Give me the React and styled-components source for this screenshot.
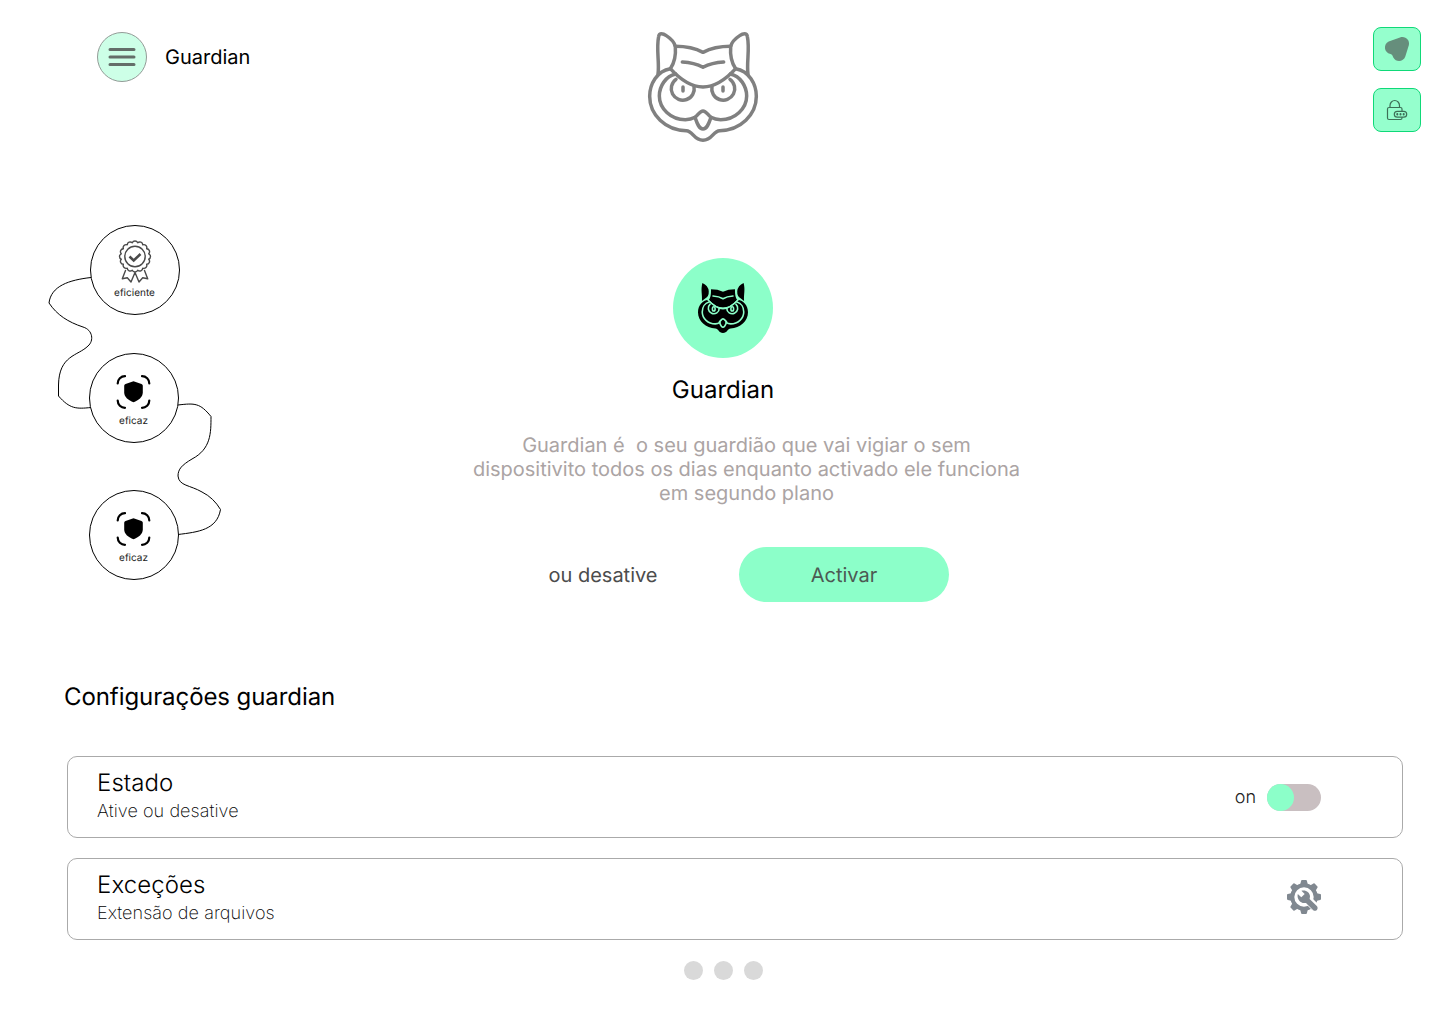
import React from 'react';
import styled, { createGlobalStyle } from 'styled-components';

const GlobalStyle = createGlobalStyle`
  *, *::before, *::after { box-sizing: border-box; }
  body { margin: 0; background: #fff; }
  h1, h2, h3, p { margin: 0; font-weight: 400; }
  button { font: inherit; padding: 0; cursor: pointer; text-rendering: inherit; }
  svg { display: block; flex: none; overflow: visible; }
`;

const Page = styled.div`
  width: 1446px;
  height: 1024px;
  overflow: hidden;
  display: flex;
  flex-direction: column;
  background: #fff;
  color: #000;
  font-family: Inter, 'Liberation Sans', sans-serif;
  font-size: 20px;
  text-rendering: geometricPrecision;
`;

const Header = styled.header`
  display: grid;
  grid-template-columns: 551px 110px 1fr;
  align-items: start;
  height: 225px;
  flex: none;
  padding: 27px 25px 0 97px;
`;

const Brand = styled.div`
  display: flex;
  align-items: center;
  gap: 18px;
  margin-top: 5px;
  line-height: 24px;
`;

const MenuButton = styled.button`
  display: grid;
  place-items: center;
  width: 50px;
  height: 50px;
  border: 1px solid #939b97;
  border-radius: 50%;
  background: #cdffe7;
`;

const Emblem = styled.div`
  margin-top: 5px;
`;

const Tools = styled.nav`
  display: flex;
  flex-direction: column;
  align-items: flex-end;
  gap: 17px;
`;

const ToolButton = styled.button`
  display: grid;
  place-items: center;
  width: 48px;
  height: 44px;
  border: 1px solid #0fd978;
  border-radius: 8px;
  background: #95ffcd;
`;

const Main = styled.main`
  display: flex;
  height: 445px;
  flex: none;
`;

const Diagram = styled.aside`
  position: relative;
  width: 449px;
  flex: none;
`;

const Links = styled.svg`
  position: absolute;
  left: 0;
  top: 0;
`;

const Node = styled.div`
  position: absolute;
  left: ${(p) => p.$x}px;
  top: ${(p) => p.$y}px;
  display: flex;
  flex-direction: column;
  align-items: center;
  justify-content: flex-end;
  width: 90px;
  height: 90px;
  padding-bottom: 15px;
  border: 1px solid #000;
  border-radius: 50%;
  background: #fff;
  color: #222;
  font-size: 10px;
  line-height: 12px;
`;

const NodeLabel = styled.span`
  margin-top: ${(p) => p.$gap}px;
  padding-right: 1px;
`;

const Hero = styled.section`
  display: flex;
  flex-direction: column;
  align-items: center;
  width: 548px;
  padding-top: 33px;
`;

const Badge = styled.div`
  display: grid;
  place-items: center;
  width: 100px;
  height: 100px;
  border-radius: 50%;
  background: #8cffc9;
`;

const HeroTitle = styled.h1`
  margin-top: 17px;
  font-size: 24px;
  line-height: 29px;
`;

const Description = styled.p`
  align-self: flex-start;
  width: 595px;
  margin-top: 29px;
  color: #aba4a4;
  font-size: 20px;
  line-height: 24px;
  text-align: center;
  white-space: pre;
`;

const Actions = styled.div`
  display: flex;
  align-items: center;
  align-self: flex-start;
  gap: 81px;
  margin: 42px 0 0 99px;
  color: #4c4c4c;
`;

const PlainAction = styled.button`
  width: 110px;
  border: 0;
  background: none;
  color: inherit;
  white-space: nowrap;
`;

const PrimaryAction = styled.button`
  width: 210px;
  height: 55px;
  border: 0;
  border-radius: 28px;
  background: #8cffc9;
  color: #4c5a53;
`;

const Settings = styled.section`
  padding: 12px 43px 0 67px;
`;

const SettingsTitle = styled.h2`
  margin-left: -3px;
  font-size: 24px;
  line-height: 29px;
  letter-spacing: -0.08px;
`;

const CardList = styled.div`
  display: flex;
  flex-direction: column;
  gap: 20px;
  margin-top: 45px;
`;

const Card = styled.div`
  display: flex;
  align-items: center;
  justify-content: space-between;
  height: 82px;
  padding: 0 81px 0 29px;
  border: 1px solid #aaa;
  border-radius: 10px;
`;

const CardTitle = styled.h3`
  font-size: 24px;
  font-weight: 300;
  line-height: 29px;
  letter-spacing: 0.1px;
`;

const CardText = styled.p`
  margin-top: 4px;
  padding-bottom: 3px;
  font-size: 18px;
  font-weight: 200;
  line-height: 22px;
  letter-spacing: 0.08px;
`;

const SwitchGroup = styled.div`
  display: flex;
  align-items: center;
  gap: 11px;
  font-size: 18px;
  font-weight: 300;
  color: #222;
`;

const SwitchLabel = styled.span`
  padding-top: 1px;
`;

const Track = styled.div`
  width: 54px;
  height: 27px;
  border-radius: 14px;
  background: #c9bfc1;
`;

const Thumb = styled.div`
  width: 27px;
  height: 27px;
  border-radius: 50%;
  background: #8cffc9;
`;

const SettingsLink = styled.div`
  padding-bottom: 4px;
`;

const Pager = styled.footer`
  display: flex;
  justify-content: center;
  gap: 11px;
  margin-top: 21px;
`;

const Dot = styled.span`
  width: 19px;
  height: 19px;
  border-radius: 50%;
  background: #d9d9d9;
`;

const OwlOutline = () => (
  <svg width="110" height="110" viewBox="39 36 330 330" fill="none" stroke="#808080" strokeWidth="10.5" strokeLinecap="round" strokeLinejoin="round">
    <path d="M69 162C74 130 63 88 71 49C73 38 84 40 94 47C109 57 119 67 121 80C123 106 119 128 106 146" />
    <path d="M339 162C334 130 345 88 337 49C335 38 324 40 314 47C299 57 289 67 287 80C285 106 289 128 302 146" />
    <path d="M121 79Q170 79 204 97Q238 79 287 79" />
    <path d="M142 126C166 127 184 131 204 142C224 131 242 127 266 126" />
    <path d="M106 146C137 180 170 201 204 201C238 201 271 180 302 146" />
    <path d="M106 146C66 153 44 192 44 229C44 284 91 331 154 332C174 333 176 361 204 361C232 361 234 333 254 332C317 331 364 284 364 229C364 192 342 153 302 146" />
    <path d="M122 162C92 168 73 199 73 228C73 265 107 299 151 299C162 299 171 297 180 292" />
    <path d="M286 162C316 168 335 199 335 228C335 265 301 299 257 299C246 299 237 297 228 292" />
    <path d="M123 178A34.500 34.500 0 1 0 177 199" />
    <path d="M285 178A34.500 34.500 0 1 1 231 199" />
    <path d="M144 201V213M264 201V213" />
    <path d="M204 273C194 273 190 285 180 292C185 306 191 327 204 327C217 327 223 306 228 292C218 285 214 273 204 273Z" />
  </svg>
);

const OwlSolid = () => (
  <svg width="50" height="50" viewBox="39 36 330 330" fill="none" strokeLinecap="round" strokeLinejoin="round">
    <g fill="#000">
      <path d="M65 154C68 110 56 80 68 36Q106 52 110 90Q112 125 86 138Z" />
      <path d="M343 154C340 110 352 80 340 36Q302 52 298 90Q296 125 322 138Z" />
      <path d="M125 78Q170 78 204 94Q238 78 283 78Q282 130 297 148Q250 198 204 198Q158 198 111 148Q126 130 125 78Z" />
      <path d="M106 146C69 151 39 184 39 229C39 288 91 334 154 336C174 337 176 366 204 366C232 366 234 337 254 336C317 334 369 288 369 229C369 184 339 151 302 146Q250 204 204 204Q158 204 106 146Z" />
    </g>
    <g stroke="#8cffc9" strokeWidth="10.500">
      <path d="M104 146C137 183 170 205 204 205C238 205 271 183 304 146" />
      <path d="M112 162C84 169 67 196 67 227C67 269 105 306 153 306C165 306 174 303 184 296" />
      <path d="M296 162C324 169 341 196 341 227C341 269 303 306 255 306C243 306 234 303 224 296" />
      <path d="M119 176A36 36 0 1 0 179 202" />
      <path d="M289 176A36 36 0 1 1 229 202" />
      <path d="M138 122C166 124 184 128 204 140C224 128 242 124 270 122" />
      <path d="M204 273C194 273 190 285 180 292C185 306 191 327 204 327C217 327 223 306 228 292C218 285 214 273 204 273Z" />
      <ellipse cx="143" cy="207" rx="9" ry="14" />
      <ellipse cx="265" cy="207" rx="9" ry="14" />
    </g>
  </svg>
);

const MenuIcon = () => (
  <svg width="28" height="20" viewBox="0 0 28 20" stroke="#646e69" strokeWidth="3" strokeLinecap="round">
    <path d="M2 2.500H26M2 10H26M2 17.500H26" />
  </svg>
);

const BlobIcon = () => (
  <svg width="24" height="24" viewBox="0 0 24 24" fill="#668e7c">
    <path d="M3.700 4.400L15 .4C20.500-1.300 25 3 23.900 8L20.300 19.500C18.500 25 11 25.600 8.300 20.500C7.500 18.500 7.300 17.600 5.500 17C-1.300 15.500-1.800 7 3.700 4.400Z" />
  </svg>
);

const LockIcon = () => (
  <svg width="22" height="22" viewBox="0 0 22 22" fill="none" stroke="#3d7057" strokeWidth="1.200" strokeLinecap="round" strokeLinejoin="round">
    <path d="M14.500 20.500H3Q1.500 20.500 1.500 19V10Q1.500 8.500 3 8.500H14.500Q16 8.500 16 10V12M16 18.500V19Q16 20.500 14.500 20.500M4 8.500V6.500A4.750 5 0 0 1 13.500 6.500V8.500" />
    <rect x="8.300" y="12.300" width="12.400" height="5.900" rx="2.950" />
    <path d="M11.300 14.900V15.600M14.500 14.900V15.600M17.700 14.900V15.600" strokeWidth="2" />
  </svg>
);

const scallop = (() => {
  const count = 16;
  const point = (i) => {
    const a = (i / count) * Math.PI * 2 - Math.PI / 2 + Math.PI / count;
    return `${(17 + Math.cos(a) * 14).toFixed(2)} ${(16.5 + Math.sin(a) * 14).toFixed(2)}`;
  };
  let d = `M${point(0)}`;
  for (let i = 1; i <= count; i += 1) d += `A3 3 0 0 1 ${point(i)}`;
  return `${d}Z`;
})();

const AwardIcon = () => (
  <svg width="34" height="44" viewBox="0 0 34 44" fill="none" stroke="#4a4a4a" strokeWidth="1.400" strokeLinejoin="round" strokeLinecap="round">
    <path d={scallop} />
    <circle cx="17" cy="16.500" r="10.200" />
    <path d="M11.500 16.500L15.700 20.500L22.500 14" strokeWidth="2.500" strokeLinecap="butt" strokeLinejoin="miter" />
    <path d="M7.500 30.500L4.300 38.800L9.300 37.800L13 42L17 32.500L21 42L24.700 37.800L29.700 38.800L26.500 30.500" />
  </svg>
);

const ShieldIcon = () => (
  <svg width="34" height="34" viewBox="0 0 34 34" fill="none">
    <path d="M.7 8.500A7.300 7.300 0 0 1 8 1.200M25 1.200A7.300 7.300 0 0 1 32.300 8.500M32.300 25.500A7.300 7.300 0 0 1 25 32.800M8 32.800A7.300 7.300 0 0 1 .7 25.500" stroke="#000" strokeWidth="2.200" strokeLinecap="round" />
    <path d="M16.500 6.300L24.500 9.100Q25.800 9.600 25.800 10.800V17.300C25.800 22.300 21.500 25.300 16.500 27.300C11.500 25.300 7.200 22.300 7.200 17.300V10.800Q7.200 9.600 8.500 9.100Z" fill="#000" />
  </svg>
);

const GearIcon = () => (
  <svg width="34" height="34" viewBox="-17 -17 34 34" fill="#808890">
    {[0, 45, 90, 135, 180, 225, 270, 315].map((angle) => (
      <path key={angle} d="M-4 -11.500L-2.900 -16.200Q-2.700 -17 -2 -17H2Q2.700 -17 2.900 -16.200L4 -11.500Z" transform={`rotate(${angle})`} />
    ))}
    <circle r="11.700" fill="none" stroke="#808890" strokeWidth="4" />
    <path d="M0 -1L13 12" stroke="#fff" strokeWidth="8.500" />
    <path d="M-6.200 -3L-2.700 .2L.7-3L-2.600-6.300C1.500-7.600 6-4.700 6-.6L5.600 2L12.800 9C15.300 12 11.500 15.500 9 13L2 5.900C-3.200 7.200-7.600 2-6.200-3Z" />
  </svg>
);

const nodes = [
  { id: 'efficient', label: 'eficiente', x: 90, y: 0, gap: 3, Icon: AwardIcon },
  { id: 'effective-1', label: 'eficaz', x: 89, y: 128, gap: 6, Icon: ShieldIcon },
  { id: 'effective-2', label: 'eficaz', x: 89, y: 265, gap: 6, Icon: ShieldIcon },
];

export default function App() {
  return (
    <Page>
      <GlobalStyle />
      <Header>
        <Brand>
          <MenuButton aria-label="Menu"><MenuIcon /></MenuButton>
          <span>Guardian</span>
        </Brand>
        <Emblem><OwlOutline /></Emblem>
        <Tools>
          <ToolButton><BlobIcon /></ToolButton>
          <ToolButton><LockIcon /></ToolButton>
        </Tools>
      </Header>
      <Main>
        <Diagram>
          <Links width="230" height="360" viewBox="0 225 230 360" fill="none" stroke="#000">
            <path d="M91 277.500C69 280 51 286 49 303C57 315 68 322 83 327C93 330 94 341 88 346C78 356 59 355 58.500 385V396C70 409 76 409 91 407.500" />
            <path d="M178 405C195 403 200 403 211 416.500C211 433 211 449 192 459C182 465 178 469 178 476C179 486 190 485 202 492C210 496 216 502 220.500 509.500C217 530 198 532 178 534.500" />
          </Links>
          {nodes.map(({ id, label, x, y, gap, Icon }) => (
            <Node key={id} $x={x} $y={y}>
              <Icon />
              <NodeLabel $gap={gap}>{label}</NodeLabel>
            </Node>
          ))}
        </Diagram>
        <Hero>
          <Badge><OwlSolid /></Badge>
          <HeroTitle>Guardian</HeroTitle>
          <Description>{'Guardian é  o seu guardião que vai vigiar o sem\ndispositivito todos os dias enquanto activado ele funciona\nem segundo plano'}</Description>
          <Actions>
            <PlainAction>ou desative</PlainAction>
            <PrimaryAction>Activar</PrimaryAction>
          </Actions>
        </Hero>
      </Main>
      <Settings>
        <SettingsTitle>Configurações guardian</SettingsTitle>
        <CardList>
          <Card>
            <div>
              <CardTitle>Estado</CardTitle>
              <CardText>Ative ou desative</CardText>
            </div>
            <SwitchGroup>
              <SwitchLabel>on</SwitchLabel>
              <Track><Thumb /></Track>
            </SwitchGroup>
          </Card>
          <Card>
            <div>
              <CardTitle>Exceções</CardTitle>
              <CardText>Extensão de arquivos</CardText>
            </div>
            <SettingsLink><GearIcon /></SettingsLink>
          </Card>
        </CardList>
      </Settings>
      <Pager><Dot /><Dot /><Dot /></Pager>
    </Page>
  );
}
